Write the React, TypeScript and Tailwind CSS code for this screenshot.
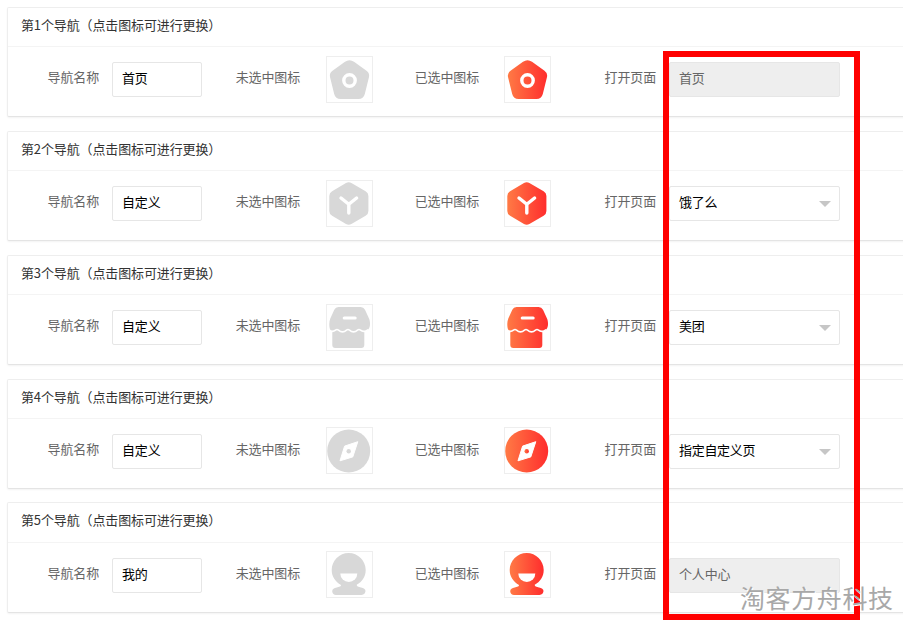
const FONT = "font-['Noto_Sans_CJK_SC','Liberation_Sans',sans-serif]";

type IconProps = { fill: string };

const Pentagon = ({ fill }: IconProps) => (
  <>
    <path
      d="M19 5.800Q23.500 2.500 28 5.800L40.500 14.800Q43.800 17.200 43 21L38.800 38Q37.500 43 32.500 43H14.500Q9.500 43 8.200 38L4 21Q3.200 17.200 6.500 14.800Z"
      fill={fill}
    />
    <circle cx="23.500" cy="24.500" r="5.700" fill="none" stroke="#fff" strokeWidth="3.400" />
  </>
);

const Hexagon = ({ fill }: IconProps) => (
  <>
    <path
      d="M20 3a5.500 5.500 0 0 1 5.400 0l14.200 8.200a5.500 5.500 0 0 1 2.800 4.800v15a5.500 5.500 0 0 1-2.800 4.800l-14.200 8.200a5.500 5.500 0 0 1-5.400 0L6.100 35.800a5.500 5.500 0 0 1-2.800-4.800V16a5.500 5.500 0 0 1 2.800-4.800z"
      fill={fill}
    />
    <path d="M15 18l7.800 6.300L30.600 18M22.800 24.300V33" fill="none" stroke="#fff" strokeWidth="3.400" strokeLinecap="round" strokeLinejoin="round" />
  </>
);

const Store = ({ fill }: IconProps) => (
  <>
    <path
      d="M12.500 3h22a5 5 0 0 1 4.500 2.800l4 8.700c.8 1.800 1 3.500 1 5.500 0 4-2 7-5 7h-.7V41a3 3 0 0 1-3 3h-26a3 3 0 0 1-3-3V27H6.500c-2.500 0-3.200-3-3.200-7 0-2 .3-3.700 1-5.500l4-8.700a5 5 0 0 1 4.200-2.800z"
      fill={fill}
    />
    <path
      d="M2 25.500c2.200 2.400 5.500 2.400 7.500.6 1-.8 2-.8 3 0 2.500 2.200 5.500 2.200 8 0 1-.8 2-.8 3 0 2.500 2.200 5.500 2.200 8 0 1-.8 2-.8 3 0 2 1.800 5.500 1.800 7.500-.6"
      fill="none"
      stroke="#fff"
      strokeWidth="1.600"
    />
    <rect x="16.700" y="12.600" width="14" height="3" rx="1.500" fill="#fff" />
  </>
);

const Compass = ({ fill }: IconProps) => (
  <>
    <circle cx="22.700" cy="24" r="21.500" fill={fill} />
    <path d="M31.800 14.700l-5 15.200-12.800 3.900 4.600-14.700z" fill="#fff" stroke="#fff" strokeWidth="1" strokeLinejoin="round" />
    <circle cx="22.700" cy="24.200" r="2.200" fill={fill} />
  </>
);

const Person = ({ fill }: IconProps) => (
  <>
    <path
      d="M22.700 2C32 2 39.700 9.700 39.700 19c0 6.500-3.600 12-9 14.800 0 .8.300 1.400 1 1.700l3.300 1c2.600.4 4.500 1.800 4.500 3.600S38 44 35.500 44H10c-2 0-3.800-1.700-3.800-3.800s2-3.200 4.500-3.600l3.300-1c.7-.3 1-.9 1-1.700C9.400 31 5.700 25.500 5.700 19 5.700 9.700 13.400 2 22.700 2z"
      fill={fill}
    />
    <path d="M14.300 22.500h17a8.500 8.500 0 0 1-17 0z" fill="#fff" />
  </>
);

const navs = [
  { title: "第1个导航（点击图标可进行更换）", name: "首页", icon: Pentagon, page: "首页", locked: true },
  { title: "第2个导航（点击图标可进行更换）", name: "自定义", icon: Hexagon, page: "饿了么", locked: false },
  { title: "第3个导航（点击图标可进行更换）", name: "自定义", icon: Store, page: "美团", locked: false },
  { title: "第4个导航（点击图标可进行更换）", name: "自定义", icon: Compass, page: "指定自定义页", locked: false },
  { title: "第5个导航（点击图标可进行更换）", name: "我的", icon: Person, page: "个人中心", locked: true },
];

const IconBox = ({ icon: Icon, fill, lift }: { icon: React.FC<IconProps>; fill: string; lift: boolean }) => (
  <div className={`w-[47px] h-[47px] shrink-0 border border-[#eeeeee] ${lift ? "-translate-y-px" : ""}`}>
    <svg viewBox="1 1 45 45" className="w-[45px] h-[45px] block">
      <Icon fill={fill} />
    </svg>
  </div>
);

const Label = ({ text, width }: { text: string; width: string }) => (
  <span className={`${width} shrink-0 text-right text-[13px] leading-[20px] tracking-[-0.15px] text-[#666666] -translate-y-[3px]`}>{text}</span>
);

export default function App() {
  return (
    <div className={`relative w-[903px] h-[620px] overflow-hidden bg-white pt-[7px] pl-[7px] ${FONT}`}>
      <svg className="absolute w-0 h-0">
        <defs>
          <linearGradient id="nav-active" x1="0" y1="0" x2="1" y2="0">
            <stop offset="0" stopColor="#ff7a45" />
            <stop offset="1" stopColor="#ff2d2d" />
          </linearGradient>
        </defs>
      </svg>

      <div className="flex flex-col gap-[14px] w-[1000px]">
        {navs.map((nav, i) => (
          <section key={nav.title} className="h-[110px] last:h-[111px] last:-mt-px border border-[#eeeeee] border-b-[#e4e4e4] rounded-[2px] shadow-[0_1px_2px_rgba(0,0,0,0.05)] bg-white flex flex-col">
            <div className={`flex-1 pl-[13px] flex items-center border-b border-[#f4f4f4] text-[13px] tracking-[-0.13px] text-[#333333] ${i === 4 ? "pb-[6px]" : "pb-[4px]"}`}>
              {nav.title}
            </div>
            <div className="flex items-center h-[69px] pb-[4px] shrink-0">
              <Label text="导航名称" width="w-[91px]" />
              <div className="ml-[13px] w-[90px] h-[35px] shrink-0 flex items-center pl-[9px] pb-[3px] border border-[#e6e6e6] rounded-[2px] text-[13px] tracking-[-0.15px] text-black">
                {nav.name}
              </div>
              <Label text="未选中图标" width="w-[98px]" />
              <div className="ml-[26px]">
                <IconBox icon={nav.icon} fill="#d8d8d8" lift={i >= 3} />
              </div>
              <Label text="已选中图标" width="w-[106px]" />
              <div className="ml-[25px]">
                <IconBox icon={nav.icon} fill="url(#nav-active)" lift={i >= 3} />
              </div>
              <Label text="打开页面" width="w-[105px]" />
              {nav.locked ? (
                <div className="ml-[13px] w-[171px] h-[35px] shrink-0 flex items-center pl-[9px] pb-[3px] border border-[#e6e6e6] rounded-[2px] bg-[#eeeeee] text-[13px] tracking-[-0.15px] text-[#666666]">
                  {nav.page}
                </div>
              ) : (
                <div className="ml-[13px] w-[171px] h-[35px] shrink-0 flex items-center justify-between pl-[9px] pr-[8px] border border-[#e6e6e6] rounded-[2px] text-[13px] tracking-[-0.3px] text-black">
                  <span className="pb-[3px]">{nav.page}</span>
                  <span className="w-0 h-0 border-x-[6px] border-x-transparent border-t-[6px] border-t-[#c6c6c6]" />
                </div>
              )}
            </div>
          </section>
        ))}
      </div>

      {/* red annotation frame over the page */}
      <div className="absolute left-[663px] top-[51px] w-[197px] h-[569px] border-[6px] border-[#ff0000]" />

      {/* watermark */}
      <span className="absolute left-[740px] top-[579px] text-[25px] leading-[36px] tracking-[0.6px] text-[#a8a8a8] [text-shadow:1px_1px_0_#ffffff]">
        淘客方舟科技
      </span>
    </div>
  );
}
